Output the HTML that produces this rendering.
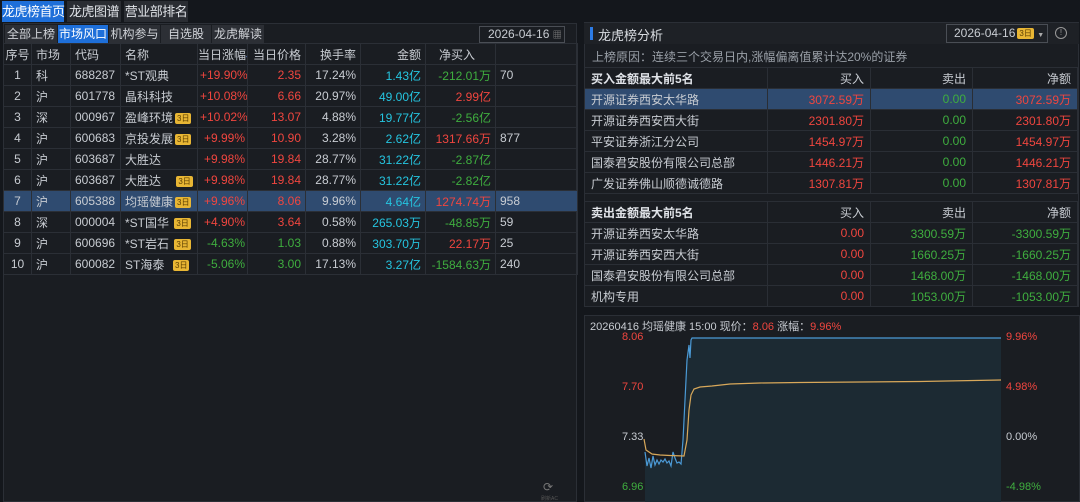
<!DOCTYPE html>
<html><head><meta charset="utf-8"><style>
*{margin:0;padding:0;box-sizing:border-box}
body{width:1080px;height:502px;background:#14171c;font-family:"Liberation Sans","Noto Sans CJK SC",sans-serif;color:#c8ccd2;font-size:12px;position:relative;overflow:hidden;white-space:nowrap}
.abs{position:absolute}
.tab{position:absolute;top:1px;height:21px;line-height:21px;font-size:13px;color:#e0e3e8;background:#2a2d33;text-align:center;letter-spacing:-0.5px}
.tab.on{background:#1e6fd9;color:#fff}
.st{position:absolute;top:25px;height:18px;line-height:18px;font-size:12px;color:#d0d3d8;background:#2c2f35;text-align:center}
.st.on{background:#1e6fd9;color:#fff}
table{border-collapse:collapse;table-layout:fixed;position:absolute}
td{height:21px;border:1px solid #2b2f36;white-space:nowrap;overflow:hidden;padding:0 4px;font-size:12px}
.r{text-align:right}.c{text-align:center}
.red{color:#f0463f}.grn{color:#3fae3f}.cy{color:#25c5e0}
.hl td{background:#2f4b70}
.b{display:inline-block;background:#e8b634;color:#5a3d00;font-size:8px;line-height:11px;height:11px;padding:0 2px;border-radius:2px;vertical-align:1px;margin-left:2px}
.rt td{border-color:#2a2e35;padding:0 6px}
</style></head><body>
<div class="tab on" style="left:2px;width:62px">龙虎榜首页</div>
<div class="tab" style="left:67px;width:54px">龙虎图谱</div>
<div class="tab" style="left:124px;width:64px">营业部排名</div>
<div class="abs" style="left:3px;top:23px;width:574px;height:479px;background:#1a1d22;border:1px solid #2b2f36"></div>
<div class="st" style="left:5px;width:52px">全部上榜</div>
<div class="st on" style="left:58px;width:50px">市场风口</div>
<div class="st" style="left:109px;width:51px">机构参与</div>
<div class="st" style="left:161px;width:50px">自选股</div>
<div class="st" style="left:212px;width:52px">龙虎解读</div>
<div class="abs" style="left:479px;top:26px;width:86px;height:17px;border:1px solid #4a4e55;color:#c8ccd2;font-size:12px;line-height:15px;padding-left:8px">2026-04-16 <span style="color:#888;font-size:9px">▦</span></div>
<table style="left:3px;top:43px;width:574px">
<colgroup><col style="width:28px"><col style="width:39px"><col style="width:50px"><col style="width:77px"><col style="width:50px"><col style="width:58px"><col style="width:55px"><col style="width:65px"><col style="width:70px"><col style="width:82px"></colgroup>
<tr><td class="c" style="padding:0">序号</td><td>市场</td><td>代码</td><td>名称</td><td class="r" style="padding:0 2px 0 0">当日涨幅<span style="color:#5a7fd0;font-size:7px">◆</span></td><td class="r">当日价格</td><td class="r">换手率</td><td class="r">金额</td><td class="r" style="padding-right:20px">净买入</td><td></td></tr>
<tr><td class="c">1</td><td>科</td><td>688287</td><td>*ST观典</td><td class="r red" style="padding:0 2px">+19.90%</td><td class="r red">2.35</td><td class="r">17.24%</td><td class="r cy">1.43亿</td><td class="r grn">-212.01万</td><td>70</td></tr>
<tr><td class="c">2</td><td>沪</td><td>601778</td><td>晶科科技</td><td class="r red" style="padding:0 2px">+10.08%</td><td class="r red">6.66</td><td class="r">20.97%</td><td class="r cy">49.00亿</td><td class="r red">2.99亿</td><td></td></tr>
<tr><td class="c">3</td><td>深</td><td>000967</td><td>盈峰环境<span class="b">3日</span></td><td class="r red" style="padding:0 2px">+10.02%</td><td class="r red">13.07</td><td class="r">4.88%</td><td class="r cy">19.77亿</td><td class="r grn">-2.56亿</td><td></td></tr>
<tr><td class="c">4</td><td>沪</td><td>600683</td><td>京投发展<span class="b">3日</span></td><td class="r red" style="padding:0 2px">+9.99%</td><td class="r red">10.90</td><td class="r">3.28%</td><td class="r cy">2.62亿</td><td class="r red">1317.66万</td><td>877</td></tr>
<tr><td class="c">5</td><td>沪</td><td>603687</td><td>大胜达</td><td class="r red" style="padding:0 2px">+9.98%</td><td class="r red">19.84</td><td class="r">28.77%</td><td class="r cy">31.22亿</td><td class="r grn">-2.87亿</td><td></td></tr>
<tr><td class="c">6</td><td>沪</td><td>603687</td><td>大胜达 &nbsp; &nbsp;<span class="b">3日</span></td><td class="r red" style="padding:0 2px">+9.98%</td><td class="r red">19.84</td><td class="r">28.77%</td><td class="r cy">31.22亿</td><td class="r grn">-2.82亿</td><td></td></tr>
<tr class="hl"><td class="c">7</td><td>沪</td><td>605388</td><td>均瑶健康<span class="b">3日</span></td><td class="r red" style="padding:0 2px">+9.96%</td><td class="r red">8.06</td><td class="r">9.96%</td><td class="r cy">4.64亿</td><td class="r red">1274.74万</td><td>958</td></tr>
<tr><td class="c">8</td><td>深</td><td>000004</td><td>*ST国华 <span class="b">3日</span></td><td class="r red" style="padding:0 2px">+4.90%</td><td class="r red">3.64</td><td class="r">0.58%</td><td class="r cy">265.03万</td><td class="r grn">-48.85万</td><td>59</td></tr>
<tr><td class="c">9</td><td>沪</td><td>600696</td><td>*ST岩石 <span class="b">3日</span></td><td class="r grn" style="padding:0 2px">-4.63%</td><td class="r grn">1.03</td><td class="r">0.88%</td><td class="r cy">303.70万</td><td class="r red">22.17万</td><td>25</td></tr>
<tr><td class="c">10</td><td>沪</td><td>600082</td><td>ST海泰 &nbsp;<span class="b">3日</span></td><td class="r grn" style="padding:0 2px">-5.06%</td><td class="r grn">3.00</td><td class="r">17.13%</td><td class="r cy">3.27亿</td><td class="r grn">-1584.63万</td><td>240</td></tr>
</table>
<div class="abs" style="left:543px;top:480px;color:#777;font-size:12px">⟳</div>
<div class="abs" style="left:541px;top:495px;color:#555;font-size:5px">刷新AC</div>

<div class="abs" style="left:584px;top:22px;width:495px;height:285px;background:#1a1d22;border:1px solid #2b2f36"></div>
<div class="abs" style="left:584px;top:23px;width:495px;height:21px;background:#1e2126"></div>
<div class="abs" style="left:590px;top:27px;width:3px;height:13px;background:#2c7be5"></div>
<div class="abs" style="left:598px;top:25px;font-size:13px;color:#d8dbe0">龙虎榜分析</div>
<div class="abs" style="left:946px;top:24px;width:102px;height:19px;border:1px solid #4a4e55;font-size:12px;line-height:17px;padding-left:7px;color:#c8ccd2">2026-04-16<span class="b">3日</span> <span style="font-size:7px;color:#aaa">▼</span></div>
<div class="abs" style="left:1055px;top:27px;width:12px;height:12px;border:1px solid #999;border-radius:50%;color:#999;font-size:8px;text-align:center;line-height:10px">!</div>
<div class="abs" style="left:592px;top:48px;font-size:12px;color:#9aa0a8">上榜原因：连续三个交易日内,涨幅偏离值累计达20%的证券</div>
<table class="rt" style="left:584px;top:67px;width:493px">
<colgroup><col style="width:183px"><col style="width:103px"><col style="width:102px"><col style="width:105px"></colgroup>
<tr><td style="font-weight:bold;color:#e0e3e8">买入金额最大前5名</td><td class="r">买入</td><td class="r">卖出</td><td class="r">净额</td></tr>
<tr class="hl"><td>开源证券西安太华路</td><td class="r red">3072.59万</td><td class="r grn">0.00</td><td class="r red">3072.59万</td></tr>
<tr><td>开源证券西安西大街</td><td class="r red">2301.80万</td><td class="r grn">0.00</td><td class="r red">2301.80万</td></tr>
<tr><td>平安证券浙江分公司</td><td class="r red">1454.97万</td><td class="r grn">0.00</td><td class="r red">1454.97万</td></tr>
<tr><td>国泰君安股份有限公司总部</td><td class="r red">1446.21万</td><td class="r grn">0.00</td><td class="r red">1446.21万</td></tr>
<tr><td>广发证券佛山顺德诚德路</td><td class="r red">1307.81万</td><td class="r grn">0.00</td><td class="r red">1307.81万</td></tr>
</table>
<table class="rt" style="left:584px;top:201px;width:493px">
<colgroup><col style="width:183px"><col style="width:103px"><col style="width:102px"><col style="width:105px"></colgroup>
<tr><td style="font-weight:bold;color:#e0e3e8">卖出金额最大前5名</td><td class="r">买入</td><td class="r">卖出</td><td class="r">净额</td></tr>
<tr><td>开源证券西安太华路</td><td class="r red">0.00</td><td class="r grn">3300.59万</td><td class="r grn">-3300.59万</td></tr>
<tr><td>开源证券西安西大街</td><td class="r red">0.00</td><td class="r grn">1660.25万</td><td class="r grn">-1660.25万</td></tr>
<tr><td>国泰君安股份有限公司总部</td><td class="r red">0.00</td><td class="r grn">1468.00万</td><td class="r grn">-1468.00万</td></tr>
<tr><td>机构专用</td><td class="r red">0.00</td><td class="r grn">1053.00万</td><td class="r grn">-1053.00万</td></tr>
</table>

<div class="abs" style="left:584px;top:315px;width:496px;height:187px;background:#1a1d22;border:1px solid #2b2f36"></div>
<div class="abs" style="left:590px;top:318px;font-size:11px;color:#c8ccd2">20260416 均瑶健康 15:00 现价：<span class="red">8.06</span> 涨幅：<span class="red">9.96%</span></div>
<div class="abs red" style="left:622px;top:331px;font-size:11px">8.06</div>
<div class="abs red" style="left:622px;top:381px;font-size:11px">7.70</div>
<div class="abs" style="left:622px;top:431px;font-size:11px;color:#c8ccd2">7.33</div>
<div class="abs grn" style="left:622px;top:481px;font-size:11px">6.96</div>
<div class="abs red" style="left:1006px;top:331px;font-size:11px">9.96%</div>
<div class="abs red" style="left:1006px;top:381px;font-size:11px">4.98%</div>
<div class="abs" style="left:1006px;top:431px;font-size:11px;color:#c8ccd2">0.00%</div>
<div class="abs grn" style="left:1006px;top:481px;font-size:11px">-4.98%</div>
<svg class="abs" style="left:0;top:0" width="1080" height="502">
<path d="M645 452 L647 466 L649 458 L651 468 L653 456 L655 465 L657 460 L659 464 L661 460 L663 462 L665 459 L667 463 L669 461 L671 466 L673 452 L675 458 L677 463 L679 462 L681 464 L683 440 L685 400 L687 360 L689 345 L690 358 L691 340 L692 338 L1001 338 L1001 502 L645 502 Z" fill="#1c2a33"/>
<path d="M645 452 L647 466 L649 458 L651 468 L653 456 L655 465 L657 460 L659 464 L661 460 L663 462 L665 459 L667 463 L669 461 L671 466 L673 452 L675 458 L677 463 L679 462 L681 464 L683 440 L685 400 L687 360 L689 345 L690 358 L691 340 L692 338 L1001 338" fill="none" stroke="#4b9ad6" stroke-width="1.2"/>
<path d="M644 439 L646 450 L652 454 L660 455 L670 455.5 L684 456 L687 440 L689 410 L691 395 L694 389 L700 387 L712 386 L730 384 L760 383 L800 382.5 L860 382 L920 381.5 L1001 380" fill="none" stroke="#d8a85a" stroke-width="1.2"/>
</svg>
</body></html>
